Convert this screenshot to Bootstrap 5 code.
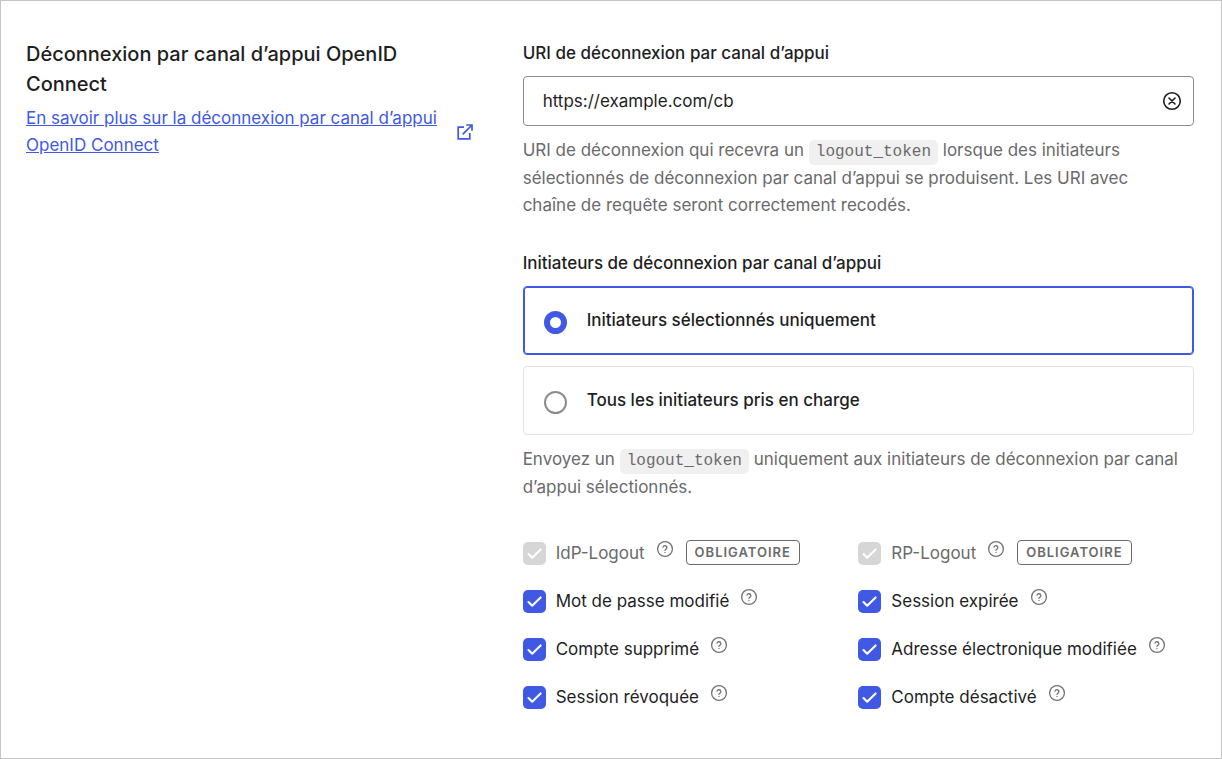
<!DOCTYPE html>
<html lang="fr">
<head>
<meta charset="utf-8">
<meta name="viewport" content="width=device-width, initial-scale=1">
<title>Déconnexion par canal d’appui OpenID Connect</title>
<link href="https://cdn.jsdelivr.net/npm/bootstrap@5.3.0/dist/css/bootstrap.min.css" rel="stylesheet">
<style>
  :root { --ink: #1e1e1f; --muted-ink: #6a6a6b; --accent: #3f59e4; }
  body { font-family: Inter, "Liberation Sans", sans-serif; font-size: 17px; line-height: 27px; color: var(--ink); background: #fff; }
  .panel { min-height: 100vh; border: 1px solid #c4c4c4; padding: 38px 27px 40px 25px; }
  .intro { padding-right: 38px; }
  .panel-title { font-size: 20px; line-height: 30px; font-weight: 500; margin: 0 0 6px; }
  .doc-link { color: var(--accent); gap: 12px; }
  .field-label { font-weight: 500; font-size: 17px; line-height: 28px; margin-bottom: 9px; display: block; float: none; }
  .uri-input { height: 50px; padding: 0 56px 0 19px; border: 1px solid #8c8c8d; border-radius: 4px; font-size: 17px; color: var(--ink); }
  .clear-btn { position: absolute; right: 12px; top: 15px; width: 20px; height: 20px; color: var(--ink); }
  .hint { color: var(--muted-ink); margin: 11px 0 0; padding-right: 12px; }
  .hint code { display: inline-block; font-family: "Liberation Mono", monospace; font-size: 16px; line-height: 19px; color: var(--muted-ink); background: #f0f0f0; border-radius: 5px; padding: 3px 7px; }
  .initiators { margin-top: 30px; }
  .choices { gap: 11px; }
  .choice { min-height: 69px; border: 1px solid #e3e3e3; border-radius: 4px; padding: 0 20px; gap: 20px; font-weight: 500; cursor: pointer; }
  .choice:has(:checked) { border-color: var(--accent); box-shadow: inset 0 0 0 1px var(--accent); }
  .choice .form-check-input { width: 23px; height: 23px; margin: 3px 0 0; border: 2px solid #8c8c8d; }
  .choice .form-check-input:checked { border: 6px solid var(--accent); background: #fff; }
  .event-grid { row-gap: 21px; margin-top: 39px; }
  .event { height: 27px; gap: 10px; }
  .event .form-check-input { width: 23px; height: 23px; margin: 0; border-radius: 5px; border: 0; flex: none; }
  .event .form-check-input:checked { background-color: var(--accent); background-size: 100%; background-image: url("data:image/svg+xml,%3Csvg xmlns='http://www.w3.org/2000/svg' viewBox='0 0 23 23'%3E%3Cpath d='m5.5 12 3.7 3.7 8.4-8.3' fill='none' stroke='%23fff' stroke-width='2.1' stroke-linecap='round' stroke-linejoin='round'/%3E%3C/svg%3E"); }
  .event .form-check-input:disabled { background-color: #d6d6d6; opacity: 1; }
  .event .form-check-input:disabled ~ label { color: var(--muted-ink); opacity: 1; }
  .help-btn { width: 18px; height: 18px; color: #737374; margin: 0 0 9px 1px; }
  .required-tag { font-size: 13px; line-height: 23px; font-weight: 600; letter-spacing: 1px; color: var(--muted-ink); border: 1px solid var(--muted-ink); border-radius: 4px; padding: 0 8px; margin: 0 0 2px 2px; }
</style>
</head>
<body>
<svg class="d-none" aria-hidden="true">
  <symbol id="help" viewBox="0 0 18 18"><g fill="none" stroke="currentColor" stroke-width="1.3" stroke-linecap="round" stroke-linejoin="round"><circle cx="9" cy="9" r="7.4"/><path d="M7 7.1a2 2 0 0 1 3.9.6c0 1.3-1.9 1.6-1.9 2.6M9 12.4v.1"/></g></symbol>
</svg>
<main class="panel">
  <div class="row">
    <section class="col-5 intro">
      <h1 class="panel-title">Déconnexion par canal d’appui OpenID Connect</h1>
      <a class="doc-link d-flex align-items-center" href="#">
        <span>En savoir plus sur la déconnexion par canal d’appui OpenID Connect</span>
        <svg class="flex-shrink-0" width="16" height="16" viewBox="0 0 16 16" fill="none" stroke="currentColor" stroke-width="1.7" aria-hidden="true"><path d="M7 3.2H1.2v11.6h11.6V9M5.7 10.3 15 1M9.3 1H15v5.7"/></svg>
      </a>
    </section>

    <form class="col-7">
      <label class="field-label" for="uri">URI de déconnexion par canal d’appui</label>
      <div class="position-relative">
        <input class="form-control uri-input" id="uri" type="text" value="https://example.com/cb">
        <button class="clear-btn btn p-0 border-0 d-flex" type="button" aria-label="Effacer">
          <svg width="20" height="20" viewBox="0 0 20 20" fill="none" stroke="currentColor" stroke-width="1.6" stroke-linecap="round"><circle cx="10" cy="10" r="8.3"/><path d="m7 7 6 6m0-6-6 6"/></svg>
        </button>
      </div>
      <p class="hint">URI de déconnexion qui recevra un <code>logout_token</code> lorsque des initiateurs sélectionnés de déconnexion par canal d’appui se produisent. Les URI avec chaîne de requête seront correctement recodés.</p>

      <fieldset class="initiators">
        <legend class="field-label">Initiateurs de déconnexion par canal d’appui</legend>
        <div class="choices d-grid">
          <label class="choice d-flex align-items-center"><input class="form-check-input" type="radio" name="scope" checked><span>Initiateurs sélectionnés uniquement</span></label>
          <label class="choice d-flex align-items-center"><input class="form-check-input" type="radio" name="scope"><span>Tous les initiateurs pris en charge</span></label>
        </div>
      </fieldset>
      <p class="hint">Envoyez un <code>logout_token</code> uniquement aux initiateurs de déconnexion par canal d’appui sélectionnés.</p>

      <div class="row gx-0 event-grid">
        <div class="col-6"><div class="event d-flex align-items-center"><input class="form-check-input" type="checkbox" id="idp" checked disabled><label for="idp">IdP-Logout</label><button class="help-btn btn p-0 border-0 d-flex" type="button" aria-label="Aide"><svg width="18" height="18"><use href="#help"/></svg></button><span class="required-tag">OBLIGATOIRE</span></div></div>
        <div class="col-6"><div class="event d-flex align-items-center"><input class="form-check-input" type="checkbox" id="rp" checked disabled><label for="rp">RP-Logout</label><button class="help-btn btn p-0 border-0 d-flex" type="button" aria-label="Aide"><svg width="18" height="18"><use href="#help"/></svg></button><span class="required-tag">OBLIGATOIRE</span></div></div>
        <div class="col-6"><div class="event d-flex align-items-center"><input class="form-check-input" type="checkbox" id="pwd" checked><label for="pwd">Mot de passe modifié</label><button class="help-btn btn p-0 border-0 d-flex" type="button" aria-label="Aide"><svg width="18" height="18"><use href="#help"/></svg></button></div></div>
        <div class="col-6"><div class="event d-flex align-items-center"><input class="form-check-input" type="checkbox" id="expired" checked><label for="expired">Session expirée</label><button class="help-btn btn p-0 border-0 d-flex" type="button" aria-label="Aide"><svg width="18" height="18"><use href="#help"/></svg></button></div></div>
        <div class="col-6"><div class="event d-flex align-items-center"><input class="form-check-input" type="checkbox" id="deleted" checked><label for="deleted">Compte supprimé</label><button class="help-btn btn p-0 border-0 d-flex" type="button" aria-label="Aide"><svg width="18" height="18"><use href="#help"/></svg></button></div></div>
        <div class="col-6"><div class="event d-flex align-items-center"><input class="form-check-input" type="checkbox" id="email" checked><label for="email">Adresse électronique modifiée</label><button class="help-btn btn p-0 border-0 d-flex" type="button" aria-label="Aide"><svg width="18" height="18"><use href="#help"/></svg></button></div></div>
        <div class="col-6"><div class="event d-flex align-items-center"><input class="form-check-input" type="checkbox" id="revoked" checked><label for="revoked">Session révoquée</label><button class="help-btn btn p-0 border-0 d-flex" type="button" aria-label="Aide"><svg width="18" height="18"><use href="#help"/></svg></button></div></div>
        <div class="col-6"><div class="event d-flex align-items-center"><input class="form-check-input" type="checkbox" id="disabled-account" checked><label for="disabled-account">Compte désactivé</label><button class="help-btn btn p-0 border-0 d-flex" type="button" aria-label="Aide"><svg width="18" height="18"><use href="#help"/></svg></button></div></div>
      </div>
    </form>
  </div>
</main>
<script src="https://cdn.jsdelivr.net/npm/bootstrap@5.3.0/dist/js/bootstrap.bundle.min.js"></script>
</body>
</html>
